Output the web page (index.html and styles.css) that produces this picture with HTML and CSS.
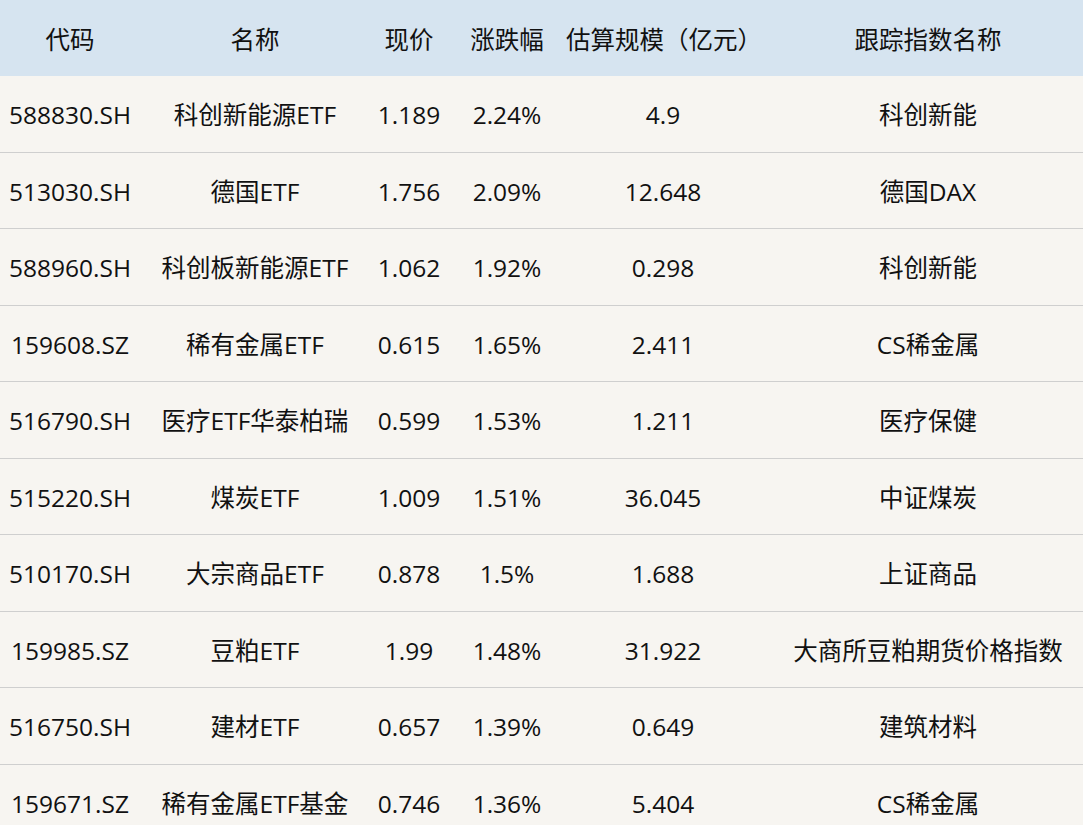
FILE: index.html
```html
<!DOCTYPE html>
<html lang="zh-CN">
<head>
<meta charset="utf-8">
<title>ETF</title>
<link rel="stylesheet" href="styles.css">
</head>
<body>
<div class="wrap">
<table class="etf">
  <colgroup>
    <col class="c1"><col class="c2"><col class="c3"><col class="c4"><col class="c5"><col class="c6">
  </colgroup>
  <thead>
    <tr><th>代码</th><th>名称</th><th>现价</th><th>涨跌幅</th><th>估算规模（亿元）</th><th>跟踪指数名称</th></tr>
  </thead>
  <tbody>
    <tr><td>588830.SH</td><td>科创新能源ETF</td><td>1.189</td><td>2.24%</td><td>4.9</td><td>科创新能</td></tr>
    <tr><td>513030.SH</td><td>德国ETF</td><td>1.756</td><td>2.09%</td><td>12.648</td><td>德国DAX</td></tr>
    <tr><td>588960.SH</td><td>科创板新能源ETF</td><td>1.062</td><td>1.92%</td><td>0.298</td><td>科创新能</td></tr>
    <tr><td>159608.SZ</td><td>稀有金属ETF</td><td>0.615</td><td>1.65%</td><td>2.411</td><td>CS稀金属</td></tr>
    <tr><td>516790.SH</td><td>医疗ETF华泰柏瑞</td><td>0.599</td><td>1.53%</td><td>1.211</td><td>医疗保健</td></tr>
    <tr><td>515220.SH</td><td>煤炭ETF</td><td>1.009</td><td>1.51%</td><td>36.045</td><td>中证煤炭</td></tr>
    <tr><td>510170.SH</td><td>大宗商品ETF</td><td>0.878</td><td>1.5%</td><td>1.688</td><td>上证商品</td></tr>
    <tr><td>159985.SZ</td><td>豆粕ETF</td><td>1.99</td><td>1.48%</td><td>31.922</td><td>大商所豆粕期货价格指数</td></tr>
    <tr><td>516750.SH</td><td>建材ETF</td><td>0.657</td><td>1.39%</td><td>0.649</td><td>建筑材料</td></tr>
    <tr><td>159671.SZ</td><td>稀有金属ETF基金</td><td>0.746</td><td>1.36%</td><td>5.404</td><td>CS稀金属</td></tr>
  </tbody>
</table>
</div>
</body>
</html>
```

FILE: styles.css
```css
html, body {
  margin: 0;
  padding: 0;
  background: #f7f5f1;
}
.wrap {
  width: 1083px;
  height: 825px;
  overflow: hidden;
}
.etf {
  width: 1096px;
  table-layout: fixed;
  border-collapse: collapse;
  font-family: "Open Sans", "Noto Sans CJK SC", sans-serif;
  font-size: 24.5px;
  color: #111111;
}
.c1 { width: 140px; }
.c2 { width: 230px; }
.c3 { width: 78px; }
.c4 { width: 118px; }
.c5 { width: 194px; }
.c6 { width: 336px; }
.etf th {
  height: 76px;
  padding: 0;
  font-weight: normal;
  text-align: center;
  background: #d6e4f0;
  white-space: nowrap;
}
.etf td {
  height: 72.5px;
  padding: 3px 0 0;
  line-height: 1;
  text-align: center;
  white-space: nowrap;
  border-bottom: 1px solid #cfcfcf;
}
```
